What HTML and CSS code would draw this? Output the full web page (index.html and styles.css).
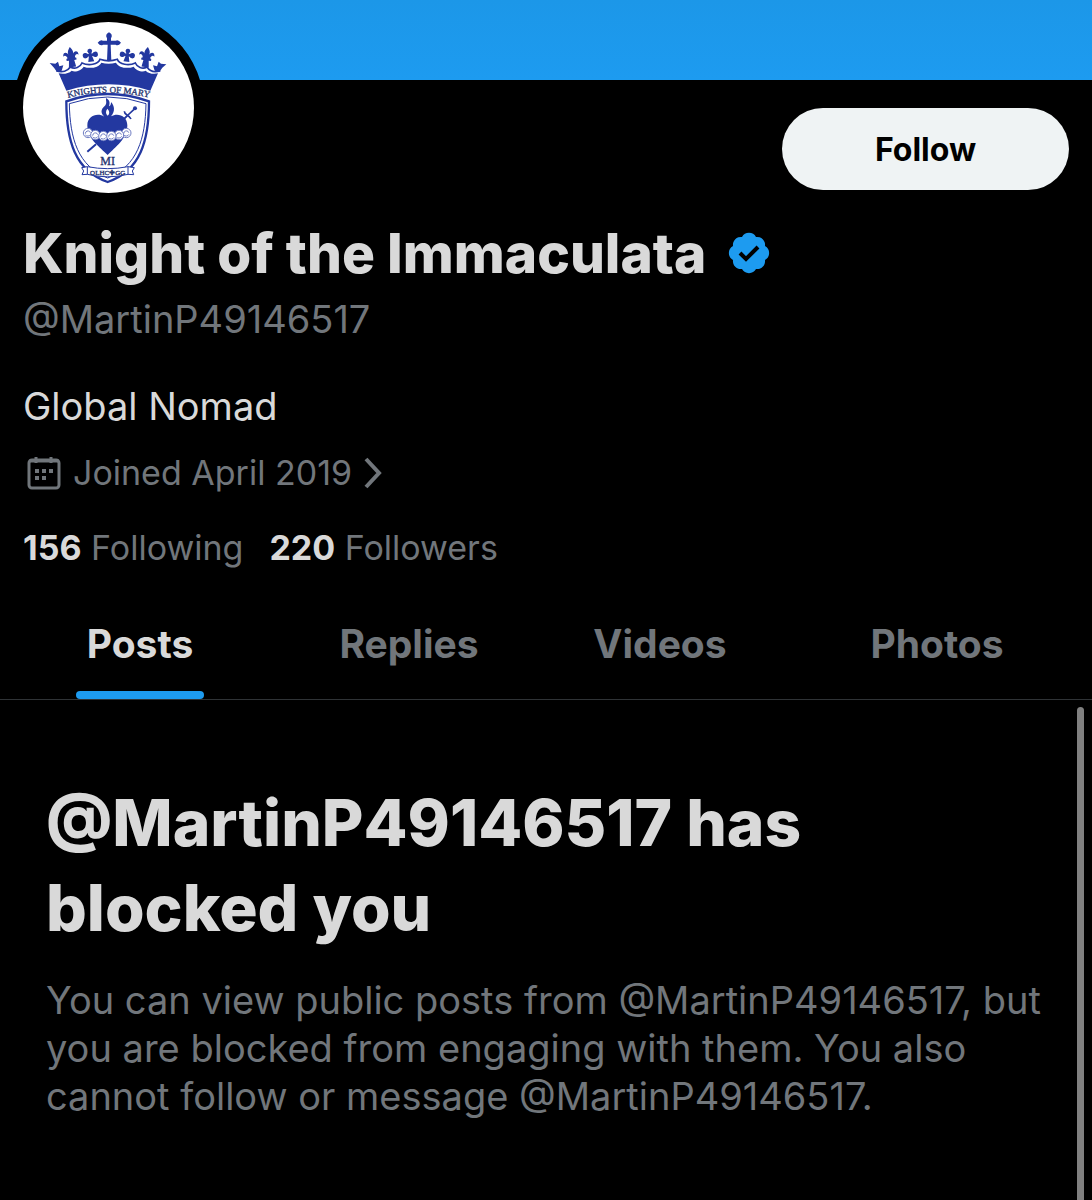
FILE: index.html
```html
<!DOCTYPE html>
<html lang="en">
  <head>
    <meta charset="UTF-8" />
    <meta name="viewport" content="width=device-width, initial-scale=1.0" />
    <title>Knight of the Immaculata (@MartinP49146517)</title>
    <link rel="stylesheet" href="styles.css">
  </head>
  <body>
    <div class="banner"></div>

    <header class="profile">
      <div class="profile-top">
        <div class="avatar">
          <svg viewBox="39 66 513 513" role="img" aria-label="Knights of Mary crest">
            <defs>
              <path id="motto" d="M168 295Q293 261 424 295" />
              <path id="lily" d="M0-34C7-25 11-17 5-8C10-24 24-22 23-8C19-13 13-10 11-2L15 0V6H8L11 26H-11L-8 6H-15V0L-11-2C-13-10-19-13-23-8C-24-22-10-24-5-8C-11-17-7-25 0-34Z" />
              <g id="clover">
                <circle cy="-12" r="7" />
                <circle cx="-15" r="8" />
                <circle cx="15" r="8" />
                <path d="M-3-12H3L4-4H14V4H5L9 20H-9L-5 4H-14V-4H-4Z" />
              </g>
              <g id="rose">
                <circle r="14" />
                <path d="M-8 2C-8-8 6-9 7-1M-8 6C-4 11 5 10 8 4" />
              </g>
            </defs>

            <!-- crown -->
            <g class="crest-fill">
              <path d="M146 220C160 223 176 221 185 212C194 218 214 212 221 200C238 207 266 204 274 188Q296 194 318 188C326 204 354 207 371 200C378 212 398 218 407 212C416 221 430 223 444 220L421 272Q296 234 169 272Z" />
              <path d="M291 182L293 134H279Q271 139 263 128Q271 117 279 122H291V115Q284 103 297 97Q310 103 303 115V122H317Q325 117 333 128Q325 139 317 134H302L304 182Z" />
              <use href="#lily" transform="translate(184 175) rotate(-8)" />
              <use href="#lily" transform="translate(409 175) rotate(8)" />
              <use href="#clover" transform="translate(241 165) rotate(-8)" />
              <use href="#clover" transform="translate(352 165) rotate(8)" />
              <path d="M119 189L136 191L144 185L148 199L160 196L155 212L141 216L132 203Z" />
              <path d="M469 193L453 191L446 185L441 199L429 196L434 212L448 216L457 203Z" />
            </g>
            <path class="crest-line" d="M139 212C157 219 173 213 181 201C195 209 211 201 216 189C235 198 265 194 270 178Q296 187 322 178C327 194 357 198 376 189C381 201 397 209 411 201C419 213 433 219 451 212" />

            <text class="crest-text crest-motto"><textPath href="#motto" startOffset="50%">KNIGHTS OF MARY</textPath></text>

            <!-- shield -->
            <path class="crest-shield" d="M169 304Q293 260 417 304C417 421 392 512 293 546C194 512 169 421 169 304Z" />
            <path class="crest-line thin" d="M178 311Q293 271 408 311C406 415 383 498 293 534C203 498 180 415 178 311Z" />

            <!-- sword -->
            <path class="crest-blade" d="M232 455L258 433M337 362L352 347" />
            <path class="crest-line" d="M343 334C343 346 356 343 363 357M354 345L372 328" />
            <circle class="crest-fill" cx="375" cy="325" r="6" />

            <!-- heart -->
            <path class="crest-fill" d="M283 350C266 334 279 322 285 317C292 309 287 302 288 294C302 301 299 312 297 319C302 317 303 312 303 306C314 318 316 334 303 349C324 337 352 348 352 376C352 417 316 441 293 465C269 441 232 417 232 376C232 347 263 337 283 350ZM292 326C286 334 287 342 293 347C300 341 299 333 292 326Z" />
            <g class="crest-rose">
              <use href="#rose" x="234" y="399" />
              <use href="#rose" x="349" y="399" />
              <use href="#rose" x="256" y="405" />
              <use href="#rose" x="327" y="405" />
              <use href="#rose" x="280" y="408" />
              <use href="#rose" x="304" y="408" />
            </g>

            <text class="crest-text crest-mi" x="293" y="496">MI</text>

            <!-- ribbon -->
            <path class="crest-ribbon" d="M215 503L232 500Q293 512 354 500L373 503L367 513L371 524L354 523Q293 538 232 523L216 524L221 513Z" />
            <path class="crest-line thin" d="M232 500V523M354 500V523" />
            <text class="crest-text crest-ribbon-text" x="293" y="526">OLHC✚GG</text>
          </svg>
        </div>
        <button type="button" class="follow-btn">Follow</button>
      </div>

      <div class="name-row">
        <h1 class="name">Knight of the Immaculata</h1>
        <svg class="verified" viewBox="0 0 42 42" role="img" aria-label="Verified account">
          <path class="verified-badge" d="M14 5A8 8 0 0 1 28 5A8 8 0 0 1 37 14A8 8 0 0 1 37 28A8 8 0 0 1 28 37A8 8 0 0 1 14 37A8 8 0 0 1 5 28A8 8 0 0 1 5 14A8 8 0 0 1 14 5Z" />
          <path class="verified-check" d="M12 21L18 27L30 15" />
        </svg>
      </div>
      <p class="handle">@MartinP49146517</p>
      <p class="bio">Global Nomad</p>

      <a href="#" class="joined">
        <svg class="calendar" viewBox="0 0 34 34" aria-hidden="true">
          <rect x="2" y="4" width="30" height="28" rx="3" />
          <path d="M2 5H32M9 1V7M24 1V7" />
          <path class="calendar-dots" d="M8 13h4v4h-4zM15 13h4v4h-4zM22 13h4v4h-4zM8 20h4v4h-4zM15 20h4v4h-4z" />
        </svg>
        <span>Joined April 2019</span>
        <svg class="chevron" viewBox="0 0 18 32" aria-hidden="true">
          <path d="M2 2L15 16L2 30" />
        </svg>
      </a>

      <div class="stats">
        <a href="#"><strong>156</strong> Following</a>
        <a href="#"><strong>220</strong> Followers</a>
      </div>
    </header>

    <nav class="tabs">
      <a href="#" class="tab active">Posts</a>
      <a href="#" class="tab">Replies</a>
      <a href="#" class="tab">Videos</a>
      <a href="#" class="tab">Photos</a>
    </nav>

    <main class="blocked">
      <h2>@MartinP49146517 has blocked you</h2>
      <p>
        You can view public posts from @MartinP49146517, but you are blocked
        from engaging with them. You also cannot follow or message
        @MartinP49146517.
      </p>
      <div class="scroll-thumb"></div>
    </main>
  </body>
</html>
```
FILE: styles.css
```css
* {
  box-sizing: border-box;
  margin: 0;
  padding: 0;
}
body {
  display: flex;
  flex-direction: column;
  min-height: 100vh;
  background-color: #000;
  color: #d9d9d9;
  font-family: Inter, "Liberation Sans", sans-serif;
  font-size: 38px;
  line-height: 48px;
}
a {
  color: inherit;
  text-decoration: none;
}

.banner {
  height: 80px;
  background: linear-gradient(#1c97e8, #1d9bf0);
}

/* profile */
.profile {
  padding: 0 23px;
}
.profile-top {
  display: flex;
  justify-content: space-between;
  align-items: flex-start;
}
.avatar {
  width: 191px;
  height: 191px;
  margin: -68px 0 0 -10px;
  border: 10px solid #000;
  border-radius: 50%;
  background-color: #000;
}
.avatar svg {
  display: block;
  border-radius: 50%;
  background-color: #fff;
}
.follow-btn {
  width: 287px;
  height: 82px;
  margin-top: 28px;
  border: none;
  border-radius: 41px;
  background-color: #eff3f4;
  color: #000;
  font-family: inherit;
  font-size: 32px;
  font-weight: 700;
  cursor: pointer;
}
.name-row {
  display: flex;
  align-items: center;
  gap: 22px;
  margin-top: 18px;
}
.name {
  font-size: 55px;
  font-weight: 800;
  line-height: 64px;
}
.verified {
  width: 42px;
  height: 42px;
}
.verified-badge {
  fill: #1d9bf0;
}
.verified-check {
  fill: none;
  stroke: #000;
  stroke-width: 4;
}
.handle {
  margin-top: 10px;
  color: #71767b;
}
.bio {
  margin-top: 39px;
}
.joined {
  display: flex;
  align-items: center;
  gap: 12px;
  margin-top: 21px;
  padding-left: 4px;
  color: #71767b;
  font-size: 34px;
  line-height: 44px;
}
.calendar {
  width: 34px;
  height: 34px;
  fill: none;
  stroke: currentColor;
  stroke-width: 3;
}
.calendar-dots {
  fill: currentColor;
  stroke: none;
}
.chevron {
  width: 18px;
  height: 32px;
  fill: none;
  stroke: currentColor;
  stroke-width: 4;
}
.stats {
  display: flex;
  gap: 26px;
  margin-top: 31px;
  color: #71767b;
  font-size: 34px;
  line-height: 44px;
}
.stats strong {
  color: #d9d9d9;
  font-weight: 700;
}

/* crest */
.crest-fill {
  fill: #2338a0;
}
.crest-line {
  fill: none;
  stroke: #2338a0;
  stroke-width: 5;
}
.crest-line.thin {
  stroke-width: 3;
}
.crest-shield {
  fill: #fff;
  stroke: #2338a0;
  stroke-width: 7;
}
.crest-blade {
  stroke: #2338a0;
  stroke-width: 6;
}
.crest-rose {
  fill: #fff;
  stroke: #6f7dc2;
  stroke-width: 3;
}
.crest-ribbon {
  fill: #fff;
  stroke: #2338a0;
  stroke-width: 3;
}
.crest-text {
  fill: #26346f;
  stroke: #26346f;
  font-family: "Liberation Serif", serif;
  text-anchor: middle;
}
.crest-motto {
  font-size: 27px;
}
.crest-mi {
  font-size: 36px;
}
.crest-ribbon-text {
  font-size: 21px;
}

/* tabs */
.tabs {
  display: grid;
  grid-template-columns: 280fr 258fr 244fr 310fr;
  margin-top: 18px;
  border-bottom: 1px solid #2f3336;
  color: #71767b;
  font-size: 39px;
  font-weight: 700;
}
.tab {
  position: relative;
  justify-self: center;
  padding: 32px 11px 31px;
}
.tab.active {
  color: #d9d9d9;
}
.tab.active::after {
  content: "";
  position: absolute;
  left: 0;
  right: 0;
  bottom: 0;
  height: 8px;
  border-radius: 4px;
  background-color: #1d9bf0;
}

/* blocked message */
.blocked {
  position: relative;
  flex: 1;
  padding: 80px 40px 78px 46px;
}
.blocked h2 {
  font-size: 64px;
  font-weight: 800;
  line-height: 85px;
}
.blocked p {
  margin-top: 26px;
  color: #71767b;
}
.scroll-thumb {
  position: absolute;
  top: 7px;
  right: 8px;
  bottom: 0;
  width: 7px;
  border-radius: 4px 4px 0 0;
  background-color: #808080;
}
```
